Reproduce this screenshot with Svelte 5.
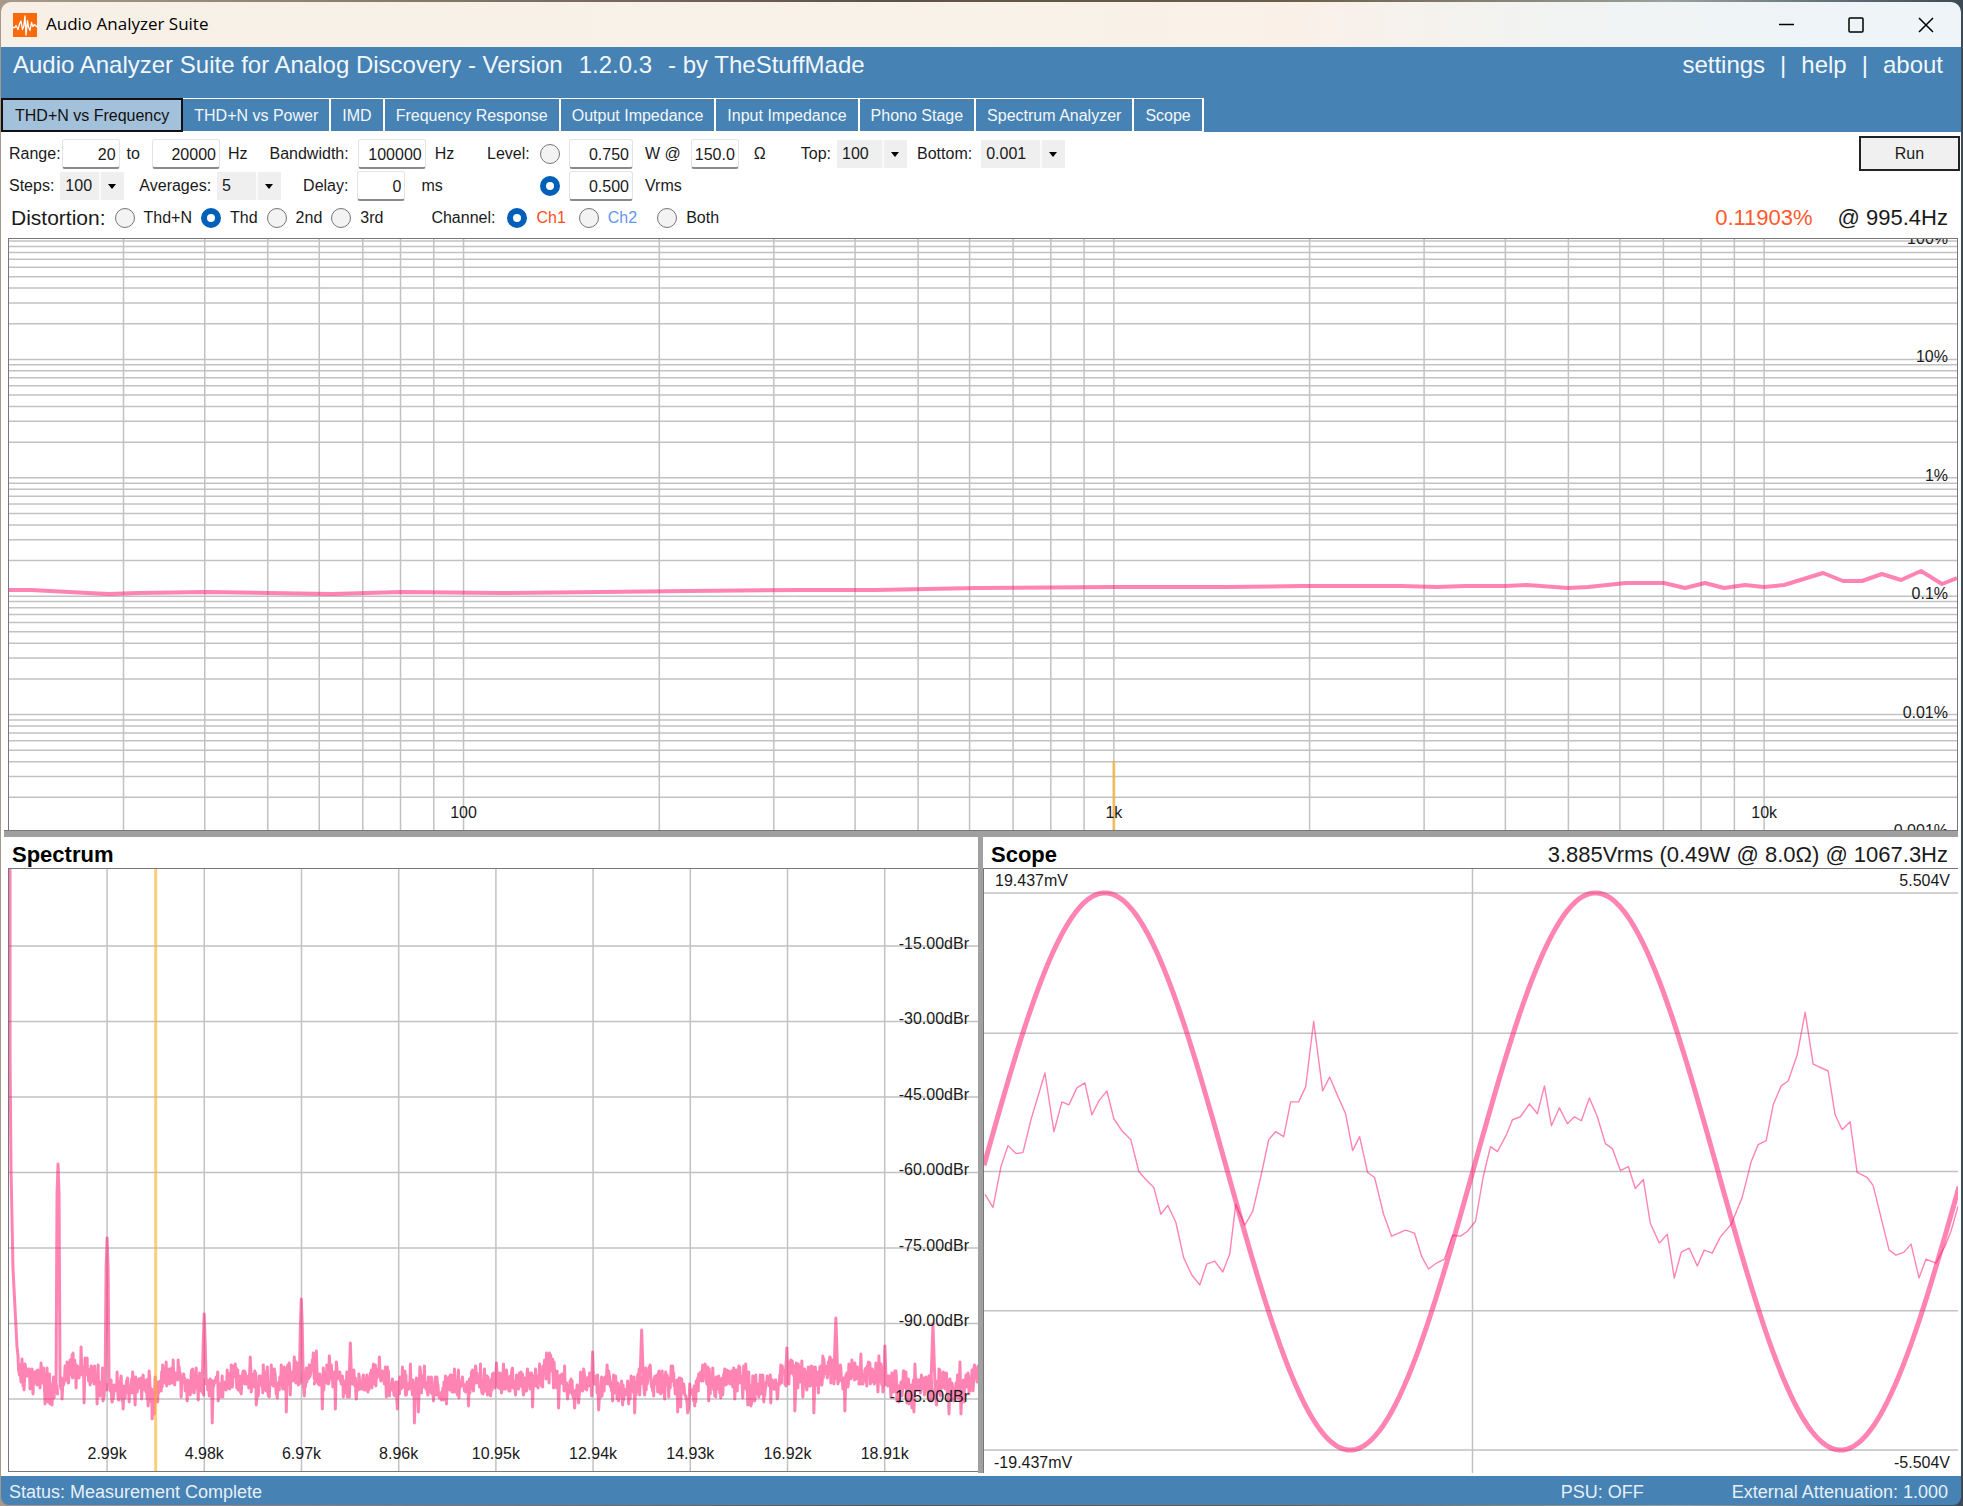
<script lang="ts">
  type Point = [number, number];

  const tabs = [
    'THD+N vs Frequency',
    'THD+N vs Power',
    'IMD',
    'Frequency Response',
    'Output Impedance',
    'Input Impedance',
    'Phono Stage',
    'Spectrum Analyzer',
    'Scope'
  ];

  let activeTab = $state('THD+N vs Frequency');
  let levelMode = $state('vrms');
  let distortion = $state('Thd');
  let channel = $state('Ch1');

  // THD chart: three decades across, five decades down
  const main = { w: 1948, h: 591, decadeX: 650.3, decadeY: 118.4, top: 2 };
  const freqX = (hz: number) => (Math.log10(hz) - Math.log10(20)) * main.decadeX;
  const pctY = (pct: number) => main.top + (2 - Math.log10(pct)) * main.decadeY;

  const freqLines: number[] = [];
  for (const base of [10, 100, 1000, 10000]) {
    for (let i = 1; i < 10; i++) {
      const hz = base * i;
      if (hz > 20 && hz < 20000) freqLines.push(hz);
    }
  }
  const pctLines: number[] = [100];
  for (const base of [10, 1, 0.1, 0.01, 0.001]) {
    for (let i = 9; i >= 1; i--) pctLines.push(base * i);
  }
  const freqLabels = [
    { text: '100', hz: 100 },
    { text: '1k', hz: 1000 },
    { text: '10k', hz: 10000 }
  ];
  const pctLabels = [100, 10, 1, 0.1, 0.01, 0.001];

  const thdTrace: Point[] = [
    [0, 351], [22, 351], [41, 352], [79, 354], [100, 355], [129, 354], [198, 353], [260, 354],
    [323, 355], [392, 353], [492, 354], [592, 353], [680, 352], [792, 351], [867, 351], [968, 349],
    [1104, 348], [1218, 348], [1293, 347], [1361, 347], [1392, 347], [1428, 348], [1456, 347],
    [1496, 347], [1518, 346], [1559, 349], [1579, 348], [1617, 344], [1638, 344], [1655, 344],
    [1676, 349], [1696, 344], [1715, 349], [1736, 346], [1755, 348], [1775, 346], [1814, 334],
    [1834, 342], [1853, 342], [1873, 335], [1892, 341], [1912, 332], [1933, 345], [1948, 339]
  ];

  // Spectrum
  const spec = { w: 968, h: 602 };
  const specFreqs = ['2.99k', '4.98k', '6.97k', '8.96k', '10.95k', '12.94k', '14.93k', '16.92k', '18.91k'];
  const specFreqX = (i: number) => 98 + i * 97.1;
  const specLevels = [-15, -30, -45, -60, -75, -90, -105];
  const specLevelY = (db: number) => 1.5 - db * 5.033;

  const harmonics: Point[] = [
    [49, 295], [98, 369], [195, 445], [292, 430], [307, 482], [341, 474], [583, 483], [632, 461],
    [777, 479], [826, 449], [851, 485], [875, 477], [923, 455]
  ];
  const dips: Point[] = [
    [45, 529], [75, 534], [114, 540], [143, 550], [203, 554], [247, 536], [277, 543], [313, 540],
    [326, 540], [405, 554], [409, 543], [459, 537], [523, 538], [549, 539], [565, 539], [589, 541],
    [625, 544], [668, 543], [678, 544], [741, 537], [785, 542], [804, 544], [828, 541], [835, 542],
    [904, 543], [939, 545], [951, 545]
  ];

  function spectrumTrace(): Point[] {
    let seed = 9241;
    const rand = () => {
      seed = (seed * 1103515245 + 12345) % 2147483648;
      return seed / 2147483648;
    };
    const pts: Point[] = [[1, 0], [1, 180], [2, 300], [4, 400], [8, 478]];
    let drift = 0;
    for (let x = 9; x <= spec.w; x++) {
      const peak = harmonics.find((p) => p[0] === x);
      const dip = dips.find((p) => p[0] === x);
      drift = drift * 0.9 + (rand() - 0.5) * 8;
      const floor = 512 - 16 * Math.exp(-(x - 9) / 30);
      if (peak) {
        pts.push([x - 2, 515], [x - 1, peak[1] + 30], [x, peak[1]], [x + 1, peak[1] + 30], [x + 2, 515]);
        x += 2;
      } else if (dip) {
        pts.push(dip);
      } else {
        pts.push([x, Math.round(floor + drift + (rand() + rand() - 1) * 22)]);
        pts.push([x + 0.5, Math.round(floor + drift + (rand() + rand() - 1) * 14)]);
      }
    }
    return pts;
  }

  // Scope
  const scope = { w: 975, h: 607 };
  const scopeLines = [24, 165, 304, 444, 584];
  const sine: Point[] = [];
  for (let x = 0; x <= 976; x += 4) {
    sine.push([x, Math.round((304 - 280 * Math.cos(((x - 121) / 491) * 2 * Math.PI)) * 10) / 10]);
  }
  const residual: Point[] = [
    [1, 327], [9, 340], [17, 299], [24, 278], [32, 286], [39, 285], [47, 252], [61, 205], [70, 264],
    [78, 234], [85, 237], [93, 220], [101, 215], [108, 247], [115, 233], [123, 223], [130, 251],
    [138, 263], [147, 272], [155, 304], [162, 312], [170, 320], [177, 347], [184, 338], [192, 355],
    [200, 391], [208, 408], [216, 418], [223, 397], [231, 394], [239, 405], [246, 387], [252, 337],
    [261, 358], [269, 344], [278, 305], [285, 272], [292, 264], [300, 269], [307, 234], [315, 234],
    [322, 219], [330, 153], [339, 223], [346, 209], [354, 228], [362, 246], [369, 283], [376, 269],
    [384, 305], [391, 310], [400, 347], [408, 369], [422, 363], [431, 366], [438, 389], [445, 402],
    [453, 396], [461, 392], [469, 368], [477, 369], [484, 364], [492, 354], [500, 308], [507, 279],
    [514, 284], [523, 267], [529, 252], [537, 249], [546, 236], [554, 246], [561, 218], [568, 258],
    [576, 240], [584, 256], [591, 249], [598, 253], [606, 230], [614, 249], [622, 276], [629, 281],
    [637, 303], [645, 299], [652, 321], [660, 312], [667, 356], [676, 376], [684, 367], [691, 411],
    [698, 385], [706, 381], [714, 399], [721, 383], [729, 386], [737, 370], [748, 357], [759, 330],
    [768, 294], [775, 277], [783, 273], [790, 237], [798, 218], [805, 213], [814, 187], [822, 144],
    [830, 196], [845, 203], [852, 247], [859, 262], [867, 254], [874, 305], [884, 310], [890, 318],
    [906, 383], [913, 388], [921, 385], [928, 377], [936, 411], [943, 392], [953, 396], [962, 379],
    [968, 364], [975, 339]
  ];

  const line = (pts: Point[]) => pts.map((p) => p.join(',')).join(' ');
  const pc = (v: number, total: number) => `${((v / total) * 100).toFixed(3)}%`;
</script>

<svelte:head>
  <title>Audio Analyzer Suite</title>
</svelte:head>

<div class="window">
  <header class="titlebar">
    <svg class="logo" viewBox="0 0 24 24" aria-hidden="true">
      <rect width="24" height="24" fill="#fb6a0a" />
      <path
        d="M0 14.500L2 14.500L3 12.500L5 16.500L6.500 11L8 8L9.500 16.500L10.800 13L12 3L13 22L14.500 7.500L15.500 14L17 17.500L18.500 9.500L20 13.500L21.500 11.500L24 14"
        fill="none" stroke="#fff" stroke-width="1.300" stroke-linejoin="round" />
    </svg>
    <span class="caption">Audio Analyzer Suite</span>
    <div class="window-buttons">
      <button aria-label="Minimize">
        <svg viewBox="0 0 16 16"><path d="M1 7.500h15" /></svg>
      </button>
      <button aria-label="Maximize">
        <svg viewBox="0 0 16 16"><rect x="1" y="1" width="14" height="14" rx="1" /></svg>
      </button>
      <button aria-label="Close">
        <svg viewBox="0 0 16 16"><path d="M1 1l14 14M15 1L1 15" /></svg>
      </button>
    </div>
  </header>

  <div class="banner">
    <div class="banner-top">
      <h1>
        <span>Audio Analyzer Suite for Analog Discovery - Version</span>
        <span>1.2.0.3</span>
        <span>- by TheStuffMade</span>
      </h1>
      <nav class="links">
        <a href="#settings">settings</a>
        <span>|</span>
        <a href="#help">help</a>
        <span>|</span>
        <a href="#about">about</a>
      </nav>
    </div>
    <div class="tabs" role="tablist">
      {#each tabs as tab}
        <button
          role="tab"
          class="tab"
          class:active={tab === activeTab}
          aria-selected={tab === activeTab}
          onclick={() => (activeTab = tab)}>{tab}</button>
      {/each}
    </div>
  </div>

  <section class="controls">
    <div class="params">
      <div class="row">
        <div class="field snug">
          <label for="from">Range:</label>
          <input id="from" class="num w58" type="text" value="20" />
        </div>
        <div class="field to">
          <label for="upto">to</label>
          <input id="upto" class="num w68" type="text" value="20000" />
        </div>
        <span class="unit">Hz</span>
        <div class="field group">
          <label for="bandwidth">Bandwidth:</label>
          <input id="bandwidth" class="num w68" type="text" value="100000" />
          <span>Hz</span>
        </div>
      </div>
      <div class="row">
        <div class="field snap">
          <label for="steps">Steps:</label>
          <span class="combo w64"><select id="steps"><option>100</option><option>50</option></select></span>
        </div>
        <div class="field snap near">
          <label for="averages">Averages:</label>
          <span class="combo w64"><select id="averages"><option>5</option><option>10</option></select></span>
        </div>
        <div class="field group">
          <label for="delay">Delay:</label>
          <input id="delay" class="num w48" type="text" value="0" />
        </div>
        <span class="unit wide">ms</span>
      </div>
    </div>

    <div class="level">
      <span>Level:</span>
      <input type="radio" name="level" value="watt" aria-label="Level in watts" bind:group={levelMode} />
      <input class="num" type="text" value="0.750" aria-label="Watts" />
      <div class="load">
        <label for="load">W @</label>
        <input id="load" class="num w48" type="text" value="150.0" />
        <span class="ohm">Ω</span>
      </div>
      <input class="second" type="radio" name="level" value="vrms" aria-label="Level in Vrms" bind:group={levelMode} />
      <input id="vrms" class="num" type="text" value="0.500" />
      <label class="load" for="vrms">Vrms</label>
    </div>

    <div class="scale">
      <div class="field snap">
        <label for="top">Top:</label>
        <span class="combo w70"><select id="top"><option>100</option><option>10</option></select></span>
      </div>
      <div class="field">
        <label for="bottom">Bottom:</label>
        <span class="combo w84"><select id="bottom"><option>0.001</option><option>0.01</option></select></span>
      </div>
    </div>

    <button class="run">Run</button>
  </section>

  <section class="modes">
    <span class="big">Distortion:</span>
    {#each ['Thd+N', 'Thd', '2nd', '3rd'] as name}
      <label class="choice">
        <input type="radio" name="distortion" value={name} bind:group={distortion} />{name}
      </label>
    {/each}
    <span class="channel">Channel:</span>
    {#each ['Ch1', 'Ch2', 'Both'] as name}
      <label class="choice {name.toLowerCase()}">
        <input type="radio" name="channel" value={name} bind:group={channel} />{name}
      </label>
    {/each}
    <output class="reading"><span class="value">0.11903%</span><span>@ 995.4Hz</span></output>
  </section>

  <main class="panes">
    <div class="plot thd">
      <svg viewBox="0 0 {main.w} {main.h}" preserveAspectRatio="none">
        {#each freqLines as hz}
          <line class="grid" x1={freqX(hz)} x2={freqX(hz)} y1="0" y2={main.h} />
        {/each}
        {#each pctLines as pct}
          <line class="grid" x1="0" x2={main.w} y1={pctY(pct)} y2={pctY(pct)} />
        {/each}
        <line class="cursor" x1={freqX(1000)} x2={freqX(1000)} y1="522" y2={main.h} />
        <polyline class="trace medium" points={line(thdTrace)} />
      </svg>
      {#each freqLabels as l}
        <span class="tick below" style="left: {pc(freqX(l.hz), main.w)}">{l.text}</span>
      {/each}
      {#each pctLabels as pct}
        <span class="tick right" style="top: {pc(pctY(pct), main.h)}">{pct}%</span>
      {/each}
    </div>

    <div class="lower">
      <section class="pane">
        <div class="pane-head"><h2>Spectrum</h2></div>
        <div class="plot">
          <svg viewBox="0 0 {spec.w} {spec.h}" preserveAspectRatio="none">
            {#each specFreqs as _, i}
              <line class="grid" x1={specFreqX(i)} x2={specFreqX(i)} y1="0" y2={spec.h} />
            {/each}
            {#each specLevels as db}
              <line class="grid" x1="0" x2={spec.w} y1={specLevelY(db)} y2={specLevelY(db)} />
            {/each}
            <polyline class="trace" points={line(spectrumTrace())} />
            <line class="cursor" x1="146.500" x2="146.500" y1="0" y2={spec.h} />
          </svg>
          {#each specFreqs as text, i}
            <span class="tick below" style="left: {pc(specFreqX(i), spec.w)}">{text}</span>
          {/each}
          {#each specLevels as db}
            <span class="tick right" style="top: {pc(specLevelY(db), spec.h)}">{db.toFixed(2)}dBr</span>
          {/each}
        </div>
      </section>

      <section class="pane scope">
        <div class="pane-head">
          <h2>Scope</h2>
          <span>3.885Vrms (0.49W @ 8.0Ω) @ 1067.3Hz</span>
        </div>
        <div class="plot open">
          <svg viewBox="0 0 {scope.w} {scope.h}" preserveAspectRatio="none">
            {#each scopeLines as y}
              <line class="grid" x1="0" x2={scope.w} y1={y} y2={y} />
            {/each}
            <line class="grid" x1="489" x2="489" y1="0" y2={scope.h} />
            <polyline class="trace thin" points={line(residual)} />
            <polyline class="trace thick" points={line(sine)} />
          </svg>
          <span class="corner tl">19.437mV</span>
          <span class="corner tr">5.504V</span>
          <span class="corner bl">-19.437mV</span>
          <span class="corner br">-5.504V</span>
        </div>
      </section>
    </div>
  </main>

  <footer class="status">
    <span>Status: Measurement Complete</span>
    <span class="psu">PSU: OFF</span>
    <span>External Attenuation: 1.000</span>
  </footer>
</div>

<style>
  :global(body) {
    background: linear-gradient(90deg, #a89a8a, #5c5348 45%, #6a5c45 65%, #9aa09c 85%, #3c4a55);
  }
  .window {
    box-sizing: border-box;
    height: 100vh;
    padding: 2px 2px 1px 1px;
    display: flex;
    flex-direction: column;
    font: 16px/20px 'Liberation Sans', Arial, sans-serif;
    color: #1a1a1a;
  }
  button, input, select {
    font: inherit;
    color: inherit;
    margin: 0;
  }

  .titlebar {
    flex: none;
    height: 45px;
    padding-left: 12px;
    display: flex;
    align-items: center;
    border-radius: 10px 10px 0 0;
    background: linear-gradient(90deg, #f8f0e6, #f8f2e8 50%, #faf0e8 66%, #f2f3f1 77%, #eef4f7 92%);
  }
  .logo {
    width: 24px;
    height: 24px;
    margin-right: 9px;
  }
  .caption {
    padding-bottom: 2px;
    font: 17px/22px 'Open Sans', sans-serif;
    color: #000;
  }
  .window-buttons {
    margin-left: auto;
    display: flex;
  }
  .window-buttons button {
    width: 70px;
    height: 45px;
    padding: 0;
    border: 0;
    background: none;
  }
  .window-buttons svg {
    width: 16px;
    height: 16px;
    display: block;
    margin: 0 auto;
    fill: none;
    stroke: #000;
    stroke-width: 1.5;
  }

  .banner {
    flex: none;
    background: #4682b4;
    color: #f2f7fb;
  }
  .banner-top {
    height: 51px;
    padding: 3px 18px 0 12px;
    box-sizing: border-box;
    display: flex;
    justify-content: space-between;
    font-size: 24px;
    line-height: 30px;
  }
  h1 {
    margin: 0;
    display: flex;
    gap: 16px;
    font-size: 24px;
    font-weight: 400;
  }
  .links {
    display: flex;
    gap: 15px;
  }
  .links a {
    color: inherit;
    text-decoration: none;
  }
  .tabs {
    display: flex;
    height: 34px;
  }
  .tab {
    padding: 2px 11px 0;
    border: 1px solid #fff;
    border-left-width: 0;
    border-right-width: 2px;
    background: #4682b4;
    color: #f2f7fb;
    white-space: nowrap;
  }
  .tab.active {
    padding: 2px 12px 0;
    border: 2px solid #111;
    background: #a3c1da;
    color: #111;
  }

  .controls {
    flex: none;
    display: flex;
    align-items: flex-start;
    padding: 4px 1px 0 8px;
    background: #fff;
  }
  .params {
    width: 478px;
    padding-top: 2px;
  }
  .row, .scale {
    display: flex;
    height: 32px;
    align-items: center;
  }
  .field {
    display: flex;
    align-items: center;
    gap: 9px;
  }
  .field.snug {
    gap: 1px;
  }
  .field.snap {
    gap: 6px;
  }
  .field.to {
    gap: 12px;
    margin-left: 7px;
  }
  .unit {
    margin-left: 8px;
  }
  .unit.wide {
    margin-left: 16px;
  }
  .group {
    margin-left: 22px;
  }
  .near {
    margin-left: 15px;
  }
  .num {
    box-sizing: border-box;
    width: 64px;
    height: 30px;
    padding: 2px 3px 0;
    border: 1px solid #e4e4e4;
    border-bottom: 2px solid #8a8a8a;
    border-radius: 3px;
    background: #fff;
    text-align: right;
  }
  .w48 { width: 48px; }
  .w58 { width: 58px; }
  .w64 { width: 64px; }
  .w68 { width: 68px; }
  .w70 { width: 70px; }
  .w84 { width: 84px; }
  .combo {
    position: relative;
  }
  .combo::before {
    content: '';
    position: absolute;
    right: 23px;
    width: 2px;
    height: 28px;
    background: #fafafa;
  }
  .combo::after {
    content: '';
    position: absolute;
    right: 8px;
    top: 12px;
    border: 4px solid transparent;
    border-top: 5px solid #000;
    border-bottom: 0;
    pointer-events: none;
  }
  select {
    appearance: none;
    display: block;
    width: 100%;
    height: 28px;
    padding: 0 5px;
    border: 0;
    border-radius: 0;
    background: #efefef;
  }
  input[type='radio'] {
    appearance: none;
    flex: none;
    box-sizing: border-box;
    width: 20px;
    height: 20px;
    border: 1px solid #767676;
    border-radius: 50%;
    background: #f3f3f3;
  }
  input[type='radio']:checked {
    border: 6px solid #005fb8;
    background: #fff;
  }
  .level {
    display: grid;
    grid-template-columns: 53px 20px 64px auto;
    grid-template-rows: 32px 32px;
    align-items: center;
    padding-top: 2px;
  }
  .level .num:not(.w48) {
    margin-left: 9px;
  }
  .level .second {
    grid-column: 2;
  }
  .load {
    display: flex;
    align-items: center;
    gap: 10px;
    margin-left: 21px;
  }
  .ohm {
    margin-left: 5px;
  }
  .scale {
    gap: 10px;
    margin-left: 35px;
    padding-top: 2px;
  }
  .run {
    width: 101px;
    height: 35px;
    margin-left: auto;
    border: 2px solid #222;
    background: #f0f0f0;
  }

  .modes {
    flex: none;
    box-sizing: border-box;
    height: 36px;
    padding: 0 13px 4px 10px;
    display: flex;
    align-items: center;
    background: #fff;
  }
  .big {
    font-size: 21px;
  }
  .choice {
    display: flex;
    align-items: center;
    gap: 9px;
    margin-left: 9px;
  }
  .channel {
    margin-left: 48px;
  }
  .channel + .choice {
    margin-left: 12px;
  }
  .ch1 {
    color: #ff4d1c;
  }
  .choice.ch2 {
    margin-left: 13px;
    color: #6495ed;
  }
  .choice.both {
    margin-left: 20px;
  }
  .reading {
    margin-left: auto;
    display: flex;
    gap: 25px;
    font-size: 22px;
  }
  .value {
    color: #ff5a2c;
  }

  .panes {
    flex: 1;
    min-height: 0;
    display: grid;
    grid-template-rows: 592fr 7px 639fr;
    background: #fff;
  }
  .plot {
    position: relative;
    overflow: hidden;
    min-height: 0;
    border: 1px solid #777;
  }
  .plot svg {
    position: absolute;
    inset: 0;
    width: 100%;
    height: 100%;
  }
  .thd {
    margin: 0 3px 0 7px;
    border-bottom: 0;
  }
  .lower {
    grid-row: 3;
    position: relative;
    display: grid;
    grid-template-columns: 977fr 983fr;
    min-height: 0;
  }
  .lower::before {
    content: '';
    position: absolute;
    left: 3px;
    right: 3px;
    top: -7px;
    height: 7px;
    background: #a0a0a0;
    border-top: 1px solid #777;
    box-sizing: border-box;
  }
  .pane {
    display: flex;
    flex-direction: column;
    min-width: 0;
    min-height: 0;
    padding: 0 0 4px 7px;
  }
  .pane .plot {
    flex: 1;
    border-right: 0;
  }
  .pane.scope {
    padding: 0 3px 0 0;
    margin-bottom: 3px;
    border-left: 5px solid #a0a0a0;
  }
  .pane .plot.open {
    border-bottom: 0;
  }
  .pane-head {
    flex: none;
    height: 31px;
    padding: 4px 10px 0 4px;
    box-sizing: border-box;
    display: flex;
    align-items: center;
    justify-content: space-between;
    font-size: 22px;
    white-space: nowrap;
  }
  .scope .pane-head {
    padding-left: 8px;
  }
  h2 {
    margin: 0;
    font-size: 22px;
    color: #000;
  }

  .grid {
    stroke: #c2c2c2;
    stroke-width: 1.5;
    vector-effect: non-scaling-stroke;
  }
  .cursor {
    stroke: rgba(250, 175, 30, 0.6);
    stroke-width: 3;
    vector-effect: non-scaling-stroke;
  }
  .trace {
    fill: none;
    stroke: rgba(255, 20, 110, 0.52);
    stroke-width: 3;
    stroke-linejoin: round;
    vector-effect: non-scaling-stroke;
  }
  .trace.medium {
    stroke-width: 4;
  }
  .trace.thick {
    stroke-width: 5;
  }
  .trace.thin {
    stroke-width: 1.4;
  }
  .tick, .corner {
    position: absolute;
    white-space: nowrap;
  }
  .below {
    bottom: 7px;
    transform: translateX(-50%);
  }
  .right {
    right: 9px;
    transform: translateY(-60%);
  }
  .tl { top: 2px; left: 11px; }
  .tr { top: 2px; right: 8px; }
  .bl { bottom: 0; left: 10px; }
  .br { bottom: 0; right: 8px; }

  .status {
    flex: none;
    height: 29px;
    padding: 2px 13px 0 8px;
    box-sizing: border-box;
    display: flex;
    align-items: center;
    gap: 88px;
    background: #4682b4;
    border-radius: 0 0 8px 8px;
    color: #e6f0f8;
    font-size: 18px;
  }
  .psu {
    margin-left: auto;
  }
</style>
